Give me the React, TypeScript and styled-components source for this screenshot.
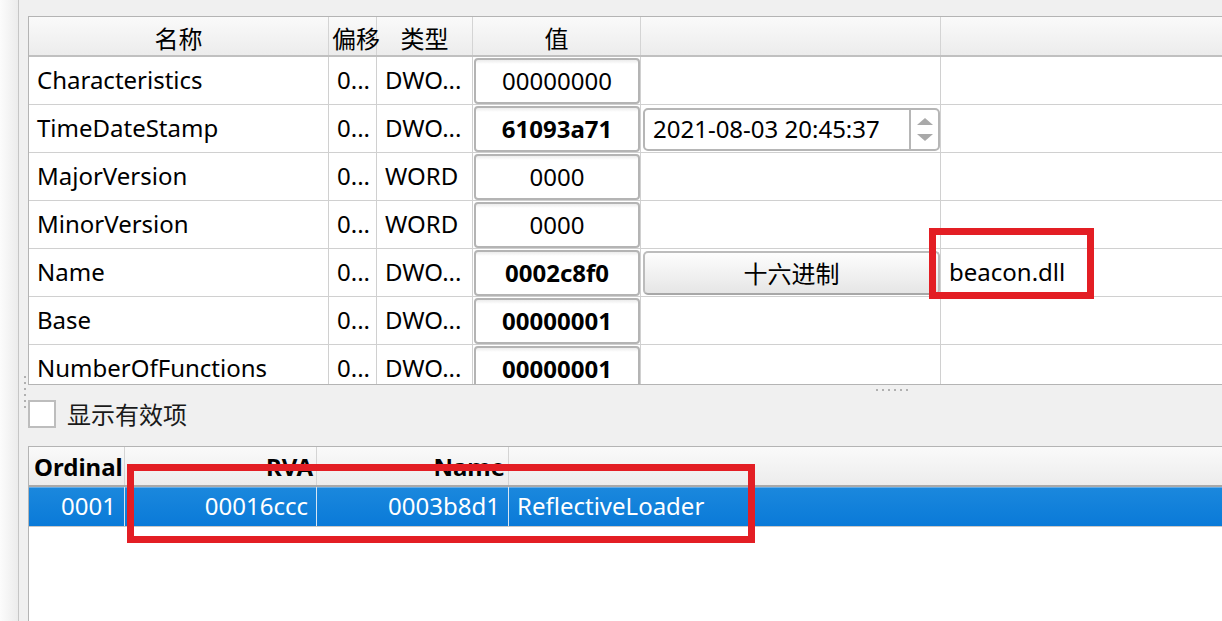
import React from 'react';
import styled, { createGlobalStyle } from 'styled-components';

const FONT = `"Noto Sans", "Noto Sans CJK SC", sans-serif`;

const GlobalStyle = createGlobalStyle`
  html, body { margin: 0; padding: 0; }
  body {
    width: 1222px;
    height: 621px;
    overflow: hidden;
    background: #f0f0f0;
    font-family: ${FONT};
  }
  #root { height: 621px; }
`;

const Window = styled.div`
  position: relative;
  display: flex;
  width: 1222px;
  height: 621px;
  overflow: hidden;
  background: #f0f0f0;
  font-family: ${FONT};
  font-size: 24px;
  color: #000;
`;

const SidePane = styled.div`
  width: 18px;
  flex: none;
  background: linear-gradient(to right, #fcfcfc, #ececec);
  border-right: 1px solid #c6c6c6;
`;

const VGutter = styled.div`
  width: 9px;
  flex: none;
  box-sizing: border-box;
  display: flex;
  flex-direction: column;
  gap: 4px;
  padding: 376px 0 0 5px;
`;

const GripDot = styled.span`
  display: block;
  width: 2px;
  height: 2px;
  flex: none;
  background: #b0b0b0;
`;

const Main = styled.div`
  flex: 1;
  min-width: 0;
  display: flex;
  flex-direction: column;
  padding-top: 16px;
`;

const Table = styled.div<{ $fill?: boolean }>`
  box-sizing: border-box;
  background: #fff;
  border: 1px solid #b4b4b4;
  border-right: none;
  overflow: hidden;
  ${(p) => (p.$fill ? 'flex: 1; border-bottom: none;' : 'height: 369px; flex: none;')}
`;

const HeaderRow = styled.div<{ $cols: string; $line: string }>`
  display: grid;
  grid-template-columns: ${(p) => p.$cols};
  height: 40px;
  box-sizing: border-box;
  border-bottom: 2px solid ${(p) => p.$line};
  background: linear-gradient(to bottom, #fafafa, #ececec);
`;

const HeaderCell = styled.div<{ $align?: string; $bold?: boolean; $pad?: number; $spill?: boolean }>`
  display: flex;
  align-items: center;
  justify-content: ${(p) => p.$align || 'center'};
  padding: ${(p) => (p.$bold ? '0' : '3px')} ${(p) => p.$pad ?? 4}px 0;
  border-right: 1px solid #d4d4d4;
  overflow: ${(p) => (p.$spill ? 'visible' : 'hidden')};
  white-space: nowrap;
  min-width: 0;
  font-weight: ${(p) => (p.$bold ? 700 : 400)};
  &:last-child { border-right: none; }
`;

const Row = styled.div<{ $cols: string }>`
  display: grid;
  grid-template-columns: ${(p) => p.$cols};
  height: 48px;
  box-sizing: border-box;
  border-bottom: 1px solid #d0d0d0;
  flex: none;
`;

const Cell = styled.div`
  display: flex;
  align-items: center;
  padding: 0 8px 3px;
  border-right: 1px solid #d0d0d0;
  overflow: hidden;
  white-space: nowrap;
  min-width: 0;
  &:last-child { border-right: none; }
`;

const WidgetCell = styled.div`
  display: flex;
  border-right: 1px solid #d0d0d0;
  min-width: 0;
`;

const ValueBox = styled.div<{ $bold?: boolean }>`
  flex: 1;
  margin: 1px 0 0 1px;
  box-sizing: border-box;
  display: flex;
  align-items: center;
  justify-content: center;
  padding-bottom: 2px;
  border: 2px solid #b4b4b4;
  border-radius: 4px;
  background: linear-gradient(to bottom, #ececec 0, #ffffff 4px, #ffffff 100%);
  font-weight: ${(p) => (p.$bold ? 700 : 400)};
`;

const SpinBox = styled.div`
  flex: 1;
  margin: 3px 0 1px 2px;
  box-sizing: border-box;
  display: flex;
  border: 2px solid #b6b6b6;
  border-radius: 5px;
  background: #fff;
`;

const SpinText = styled.div`
  flex: 1;
  display: flex;
  align-items: center;
  padding: 0 0 2px 8px;
  white-space: nowrap;
`;

const SpinButtons = styled.div`
  width: 27px;
  flex: none;
  border-left: 2px solid #b6b6b6;
  display: flex;
  align-items: center;
  justify-content: center;
`;

const PushButton = styled.div`
  flex: 1;
  margin: 2px 0 1px 2px;
  box-sizing: border-box;
  display: flex;
  align-items: center;
  justify-content: center;
  padding-bottom: 2px;
  border: 2px solid #bcbcbc;
  border-bottom-color: #a8a8a8;
  border-radius: 5px;
  background: linear-gradient(to bottom, #fdfdfd, #e6e6e6);
`;

const HSplitter = styled.div`
  height: 15px;
  flex: none;
  box-sizing: border-box;
  display: flex;
  gap: 4px;
  padding: 4px 0 0 848px;
`;

const CheckRow = styled.div`
  height: 28px;
  flex: none;
  display: flex;
  align-items: center;
  gap: 11px;
  margin-bottom: 18px;
`;

const CheckBox = styled.div`
  width: 28px;
  height: 28px;
  box-sizing: border-box;
  border: 2px solid #bdbdbd;
  background: #fff;
`;

const CheckLabel = styled.span`
  color: #1a1a1a;
  padding-bottom: 2px;
`;

const SelectedRow = styled.div<{ $cols: string }>`
  display: grid;
  grid-template-columns: ${(p) => p.$cols};
  height: 40px;
  box-sizing: border-box;
  border-bottom: 1px solid #c8c8c8;
  background: linear-gradient(to bottom, #1b88dd, #0a7ad8);
  box-shadow: inset 0 1px 0 #62ade9;
  color: #fff;
`;

const SelectedCell = styled.div<{ $align?: string }>`
  display: flex;
  align-items: center;
  justify-content: ${(p) => p.$align || 'flex-start'};
  padding: 0 8px 2px;
  border-right: 1px solid #d6e6f4;
  white-space: nowrap;
  overflow: hidden;
  &:last-child { border-right: none; }
`;

const Highlight = styled.div`
  position: absolute;
  box-sizing: border-box;
  border: 7px solid #e31e24;
  pointer-events: none;
`;

const TOP_COLS = '300px 48px 96px 168px 300px 1fr';
const EXP_COLS = '96px 192px 192px 1fr';

type Field = {
  name: string;
  offset: string;
  type: string;
  value: string;
  bold?: boolean;
  extra?: 'spin' | 'hex';
  comment?: string;
};

const fields: Field[] = [
  { name: 'Characteristics', offset: '0...', type: 'DWO...', value: '00000000' },
  { name: 'TimeDateStamp', offset: '0...', type: 'DWO...', value: '61093a71', bold: true, extra: 'spin' },
  { name: 'MajorVersion', offset: '0...', type: 'WORD', value: '0000' },
  { name: 'MinorVersion', offset: '0...', type: 'WORD', value: '0000' },
  { name: 'Name', offset: '0...', type: 'DWO...', value: '0002c8f0', bold: true, extra: 'hex', comment: 'beacon.dll' },
  { name: 'Base', offset: '0...', type: 'DWO...', value: '00000001', bold: true },
  { name: 'NumberOfFunctions', offset: '0...', type: 'DWO...', value: '00000001', bold: true },
];

const SpinArrows = () => (
  <svg width="18" height="26" viewBox="0 0 18 26">
    <path d="M1 8 L9 1 L17 8 Z" fill="#a9a9a9" />
    <path d="M1 17 L17 17 L9 24 Z" fill="#a9a9a9" />
  </svg>
);

const Grip = ({ n }: { n: number }) => (
  <>
    {Array.from({ length: n }).map((_, i) => (
      <GripDot key={i} />
    ))}
  </>
);

export default function App() {
  return (
    <Window>
      <GlobalStyle />
      <SidePane />
      <VGutter>
        <Grip n={6} />
      </VGutter>
      <Main>
        <Table>
          <HeaderRow $cols={TOP_COLS} $line="#c0c0c0">
            <HeaderCell>名称</HeaderCell>
            <HeaderCell $align="flex-start" $pad={3} $spill>偏移</HeaderCell>
            <HeaderCell>类型</HeaderCell>
            <HeaderCell>值</HeaderCell>
            <HeaderCell />
            <HeaderCell />
          </HeaderRow>
          {fields.map((f) => (
            <Row key={f.name} $cols={TOP_COLS}>
              <Cell>{f.name}</Cell>
              <Cell>{f.offset}</Cell>
              <Cell>{f.type}</Cell>
              <WidgetCell>
                <ValueBox $bold={f.bold}>{f.value}</ValueBox>
              </WidgetCell>
              {f.extra === 'spin' ? (
                <WidgetCell>
                  <SpinBox>
                    <SpinText>2021-08-03 20:45:37</SpinText>
                    <SpinButtons>
                      <SpinArrows />
                    </SpinButtons>
                  </SpinBox>
                </WidgetCell>
              ) : f.extra === 'hex' ? (
                <WidgetCell>
                  <PushButton>十六进制</PushButton>
                </WidgetCell>
              ) : (
                <Cell />
              )}
              <Cell>{f.comment || ''}</Cell>
            </Row>
          ))}
        </Table>
        <HSplitter>
          <Grip n={6} />
        </HSplitter>
        <CheckRow>
          <CheckBox />
          <CheckLabel>显示有效项</CheckLabel>
        </CheckRow>
        <Table $fill>
          <HeaderRow $cols={EXP_COLS} $line="#a9a9a9">
            <HeaderCell $align="flex-start" $bold $pad={5}>Ordinal</HeaderCell>
            <HeaderCell $align="flex-end" $bold $pad={3}>RVA</HeaderCell>
            <HeaderCell $align="flex-end" $bold $pad={3}>Name</HeaderCell>
            <HeaderCell />
          </HeaderRow>
          <SelectedRow $cols={EXP_COLS}>
            <SelectedCell $align="flex-end">0001</SelectedCell>
            <SelectedCell $align="flex-end">00016ccc</SelectedCell>
            <SelectedCell $align="flex-end">0003b8d1</SelectedCell>
            <SelectedCell>ReflectiveLoader</SelectedCell>
          </SelectedRow>
        </Table>
      </Main>
      <Highlight style={{ left: 929, top: 228, width: 165, height: 71 }} />
      <Highlight style={{ left: 127, top: 464, width: 628, height: 79 }} />
    </Window>
  );
}
